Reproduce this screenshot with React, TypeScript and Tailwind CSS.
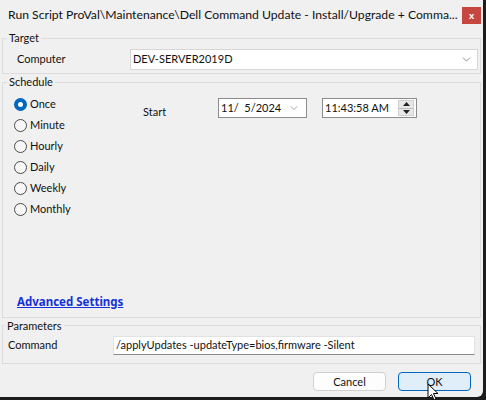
import { ChevronDown } from "lucide-react"

const periods = ["Once", "Minute", "Hourly", "Daily", "Weekly", "Monthly"]

function Radio({ checked }: { checked: boolean }) {
  return checked ? (
    <span className="flex h-[13px] w-[13px] items-center justify-center rounded-full bg-[#0067c0]">
      <span className="h-[5px] w-[5px] rounded-full bg-white" />
    </span>
  ) : (
    <span className="h-[13px] w-[13px] rounded-full border border-[#4a4a4a] bg-[#f7f7f7]" />
  )
}

function Spinner() {
  return (
    <div className="flex h-[16px] w-[16px] flex-col border border-[#cfcfcf] bg-[#e8e8e8]">
      <div className="flex flex-1 items-center justify-center border-b border-[#bdbdbd]">
        <svg width="7" height="4" viewBox="0 0 7 4">
          <path d="M0 4 L3.5 0 L7 4 Z" fill="#222" />
        </svg>
      </div>
      <div className="flex flex-1 items-center justify-center">
        <svg width="7" height="4" viewBox="0 0 7 4">
          <path d="M0 0 L3.5 4 L7 0 Z" fill="#222" />
        </svg>
      </div>
    </div>
  )
}

export default function App() {
  return (
    <div
      className="relative h-[400px] w-[486px] bg-[#1c1c1c] text-[11px] text-[#111]"
      style={{ fontFamily: 'Lato, "Noto Sans", sans-serif' }}
    >
      <div className="flex h-[397px] w-[483px] flex-col overflow-hidden rounded-br-[6px] bg-[#f0f0f0]">
        {/* Title bar */}
        <div className="flex h-[30px] shrink-0 items-center gap-[6px] pl-[8px] pr-[2px]">
          <span className="min-w-0 flex-1 whitespace-nowrap text-[12.2px]">
            Run Script ProVal\Maintenance\Dell Command Update - Install/Upgrade + Comma...
          </span>
          <span className="flex h-[17px] w-[19px] shrink-0 items-center justify-center bg-[#c64740] text-[10px] font-bold leading-none text-white">
            x
          </span>
        </div>

        {/* Target */}
        <fieldset className="mx-[2px] border border-[#dcdcdc] pb-[3px]">
          <legend className="ml-[4px] px-[2px] leading-[16px]">Target</legend>
          <div className="flex items-center pt-[3px]">
            <span className="w-[127px] pl-[14px]">Computer</span>
            <div className="flex h-[21px] w-[348px] items-center justify-between border border-[#d6d6d6] bg-white pl-[2px] pr-[4px]">
              <span>DEV-SERVER2019D</span>
              <ChevronDown size={13} strokeWidth={1.2} className="text-[#555]" />
            </div>
          </div>
        </fieldset>

        {/* Schedule */}
        <fieldset className="mx-[2px] border border-[#dcdcdc]">
          <legend className="ml-[4px] px-[2px] leading-[16px]">Schedule</legend>
          <div className="flex h-[227px] flex-col">
            <div className="flex pt-[4px]">
              <div className="flex w-[140px] flex-col pl-[11px]">
                {periods.map((p) => (
                  <label key={p} className="flex h-[21px] items-center gap-[3px]">
                    <Radio checked={p === "Once"} />
                    <span>{p}</span>
                  </label>
                ))}
              </div>
              <div className="flex items-start pt-[4px]">
                <span className="mt-[6px] w-[75px]">Start</span>
                <div className="flex h-[20px] w-[89px] items-center justify-between border border-[#8c8c8c] bg-white pl-[2px] pr-[6px]">
                  <span>11/&nbsp;&nbsp;5/2024</span>
                  <ChevronDown size={12} strokeWidth={1.2} className="text-[#666]" />
                </div>
                <div className="ml-[15px] flex h-[20px] w-[95px] items-center justify-between border border-[#8c8c8c] bg-white pl-[2px] pr-[2px]">
                  <span>11:43:58 AM</span>
                  <Spinner />
                </div>
              </div>
            </div>
            <div className="mt-auto pb-[7px] pl-[14px]">
              <a
                className="text-[11.5px] font-bold leading-[16px] text-[#1530d8] underline"
                style={{ fontFamily: '"Noto Sans", sans-serif' }}
              >
                Advanced Settings
              </a>
            </div>
          </div>
        </fieldset>

        {/* Parameters */}
        <fieldset className="mx-[2px] border border-[#dcdcdc]">
          <legend className="ml-[2px] px-[2px] leading-[15px]">Parameters</legend>
          <div className="flex items-center pb-[8px] pt-[3px]">
            <span className="w-[110px] pl-[5px]">Command</span>
            <div className="flex h-[19px] w-[362px] items-center border border-[#e2e2e2] border-b-[#8a8a8a] bg-white pl-[2px]">
              /applyUpdates -updateType=bios,firmware -Silent
            </div>
          </div>
        </fieldset>

        {/* Buttons */}
        <div className="flex justify-end gap-[12px] pr-[12px] pt-[8px]">
          <button className="h-[19px] w-[73px] rounded-[4px] border border-[#d0d0d0] bg-[#fdfdfd] leading-none">
            Cancel
          </button>
          <button className="h-[19px] w-[73px] rounded-[4px] border border-[#0067c0] bg-[#e0eef9] leading-none">
            OK
          </button>
        </div>
      </div>

      {/* Mouse cursor */}
      <svg className="absolute left-[427px] top-[383px]" width="12" height="18" viewBox="0 0 12 18">
        <path d="M1 1 L1 15 L4.5 11.5 L7 17 L9 16 L6.5 10.5 L11 10.5 Z" fill="#fff" stroke="#000" strokeWidth="1" />
      </svg>
    </div>
  )
}
